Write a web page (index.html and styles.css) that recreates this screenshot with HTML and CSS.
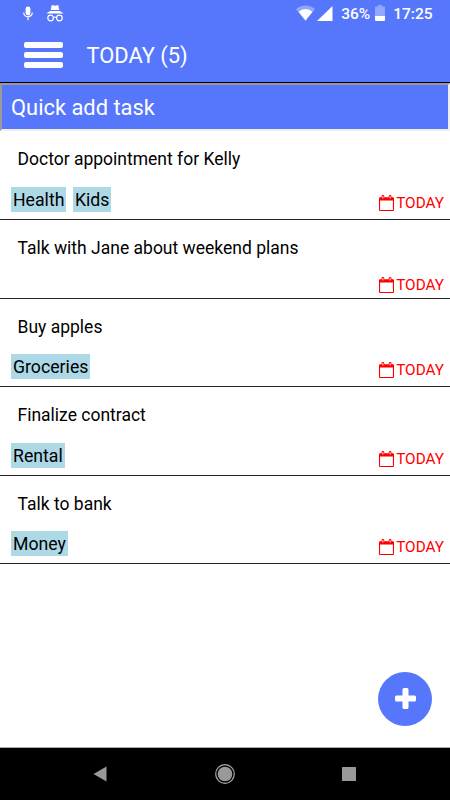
FILE: index.html
```
<!DOCTYPE html>
<html lang="en">
<head>
    <meta charset="UTF-8">
    <meta name="viewport" content="width=device-width, initial-scale=1">
    <title>Today</title>
    <link rel="stylesheet" href="styles.css">
</head>
<body>
    <svg class="defs" width="0" height="0">
        <symbol id="calendar" viewBox="0 0 15 16">
            <path d="M1 2.2h1.500v-.8a1.400 1.400 0 0 1 2.800 0v.8h4.400v-.8a1.400 1.400 0 0 1 2.800 0v.8H14q1 0 1 1V15q0 1-1 1H1q-1 0-1-1V3.200q0-1 1-1zM1.100 5.400v9.500h12.800V5.400z" fill="currentColor" fill-rule="evenodd"/>
            <path d="M3.900 1.200v2.200M11.100 1.200v2.200" stroke="#fff" stroke-width="1"/>
        </symbol>
    </svg>

    <div class="statusbar">
        <svg class="mic" width="10" height="15" viewBox="0 0 10 15">
            <rect x="2.600" y="0.500" width="4.800" height="9" rx="2.400" fill="#fff"/>
            <path d="M.7 6.500a4.300 4.300 0 0 0 8.600 0M5 11v3.200" fill="none" stroke="#fff" stroke-width="1.200"/>
        </svg>
        <svg class="incognito" width="18" height="17" viewBox="0 0 18 17">
            <path d="M5.700 0 9 .8 12.300 0l1 5H4.700zM4.200 6h9.600l3.900 2.500H.3z" fill="#fff"/>
            <g fill="none" stroke="#fff" stroke-width="1.200">
                <circle cx="4.600" cy="13" r="2.800"/>
                <circle cx="13.400" cy="13" r="2.800"/>
                <path d="M7.300 12.500q1.700-1 3.400 0"/>
            </g>
        </svg>
        <div class="system">
            <svg class="wifi" width="19" height="16" viewBox="0 0 19 16">
                <path d="M9.500 16 0 4.200Q4 .5 9.500.5T19 4.200z" fill="#fff" opacity=".35"/>
                <path d="M9.500 15.500 2.600 6.800Q5.500 4 9.500 4t6.900 2.800z" fill="#fff"/>
            </svg>
            <svg class="signal" width="16" height="15" viewBox="0 0 16 15">
                <path d="M15.500 0v15H0z" fill="#fff"/>
            </svg>
            <span class="percent">36%</span>
            <svg class="battery" width="10" height="16" viewBox="0 0 10 16">
                <path d="M3 0h4v1.500h2q1 0 1 1V11H0V2.500q0-1 1-1h2z" fill="#fff" opacity=".35"/>
                <path d="M0 11h10v4q0 1-1 1H1q-1 0-1-1z" fill="#fff"/>
            </svg>
            <span class="clock">17:25</span>
        </div>
    </div>

    <div class="header">
        <div class="menu">
            <span></span>
            <span></span>
            <span></span>
        </div>
        <div class="title">TODAY (5)</div>
    </div>

    <input class="quickadd" type="text" placeholder="Quick add task">

    <div class="tasks">
        <div class="task">
            <div class="name">Doctor appointment for Kelly</div>
            <div class="info">
                <span class="tag">Health</span>
                <span class="tag">Kids</span>
                <span class="due"><svg width="15" height="16"><use href="#calendar"/></svg>TODAY</span>
            </div>
        </div>
        <div class="task untagged">
            <div class="name">Talk with Jane about weekend plans</div>
            <div class="info">
                <span class="due"><svg width="15" height="16"><use href="#calendar"/></svg>TODAY</span>
            </div>
        </div>
        <div class="task">
            <div class="name">Buy apples</div>
            <div class="info">
                <span class="tag">Groceries</span>
                <span class="due"><svg width="15" height="16"><use href="#calendar"/></svg>TODAY</span>
            </div>
        </div>
        <div class="task">
            <div class="name">Finalize contract</div>
            <div class="info">
                <span class="tag">Rental</span>
                <span class="due"><svg width="15" height="16"><use href="#calendar"/></svg>TODAY</span>
            </div>
        </div>
        <div class="task">
            <div class="name">Talk to bank</div>
            <div class="info">
                <span class="tag">Money</span>
                <span class="due"><svg width="15" height="16"><use href="#calendar"/></svg>TODAY</span>
            </div>
        </div>
    </div>

    <button class="add" aria-label="Add task">
        <svg width="21" height="21" viewBox="0 0 21 21">
            <path d="M9 0h3q1.500 0 1.500 1.500v6h6Q21 7.500 21 9v3q0 1.500-1.500 1.500h-6v6Q13.500 21 12 21H9q-1.500 0-1.500-1.500v-6h-6Q0 13.500 0 12V9q0-1.500 1.500-1.500h6v-6Q7.500 0 9 0z" fill="#fff"/>
        </svg>
    </button>

    <div class="navbar">
        <svg width="14" height="16" viewBox="0 0 14 16"><path d="M.5 8 13.500.5v15z" fill="#999"/></svg>
        <svg width="20" height="20" viewBox="0 0 20 20">
            <circle cx="10" cy="10" r="9.300" fill="none" stroke="#aaa" stroke-width="1.200"/>
            <circle cx="10" cy="10" r="7.300" fill="#999"/>
        </svg>
        <svg width="14" height="14" viewBox="0 0 14 14"><rect width="14" height="14" rx=".5" fill="#999"/></svg>
    </div>
</body>
</html>
```

FILE: styles.css
```
* {
    box-sizing: border-box;
}

body {
    display: flex;
    flex-direction: column;
    height: 100vh;
    margin: 0;
    background-color: #fff;
    font-family: Roboto, sans-serif;
    overflow: hidden;
}

svg {
    display: block;
    flex: none;
}

.defs {
    position: absolute;
}

.statusbar {
    display: flex;
    align-items: center;
    height: 28px;
    padding: 0 17.500px 0 23px;
    background-color: #5677fc;
    color: #fff;
    font-size: 15.500px;
    font-weight: 500;
    line-height: 28px;
}

.mic {
    margin-right: 13px;
    margin-top: -1px;
}

.incognito {
    margin-top: -1px;
}

.system {
    display: flex;
    align-items: center;
    margin-left: auto;
}

.wifi {
    margin-right: 2px;
    margin-top: -2px;
}

.signal {
    margin-right: 8.500px;
    margin-top: -1px;
}

.percent {
    margin-right: 5px;
}

.battery {
    margin-right: 8px;
    margin-top: -2px;
}

.header {
    display: flex;
    align-items: center;
    height: 55px;
    padding-left: 24px;
    border-bottom: 1px solid #000;
    background-color: #5677fc;
    color: #fff;
}

.menu {
    display: flex;
    flex-direction: column;
    gap: 4px;
    width: 39px;
    margin-right: 23.500px;
    margin-top: -1px;
}

.menu span {
    height: 6px;
    border-radius: 2px;
    background-color: #fff;
}

.title {
    font-size: 21.900px;
}

.quickadd {
    width: 100%;
    height: 48px;
    flex: none;
    margin: 0;
    padding: 0 9px;
    border: 2px solid;
    border-color: #999 #eee #eee #999;
    border-radius: 0;
    background-color: #5677fc;
    font-family: inherit;
    font-size: 21.900px;
}

.quickadd::placeholder {
    color: #fff;
    opacity: 1;
}

.tasks {
    flex: 1;
}

.task {
    height: 88.600px;
    padding: 17px 6px 0 11px;
    border-bottom: 1px solid #222;
}

.name {
    padding-left: 6.500px;
    font-size: 17.500px;
    line-height: 23px;
}

.info {
    display: flex;
    gap: 6.500px;
    margin-top: 15.600px;
}

.tag {
    height: 25px;
    padding: 0 2px;
    background-color: #add8e6;
    font-size: 17.700px;
    line-height: 26px;
}

.due {
    display: flex;
    align-items: center;
    gap: 2px;
    margin: 6px 0 0 auto;
    color: #f00;
    font-size: 15.300px;
    line-height: 20px;
}

.untagged {
    height: 79px;
}

.untagged .due {
    margin-top: 0;
}

.add {
    position: absolute;
    right: 18px;
    bottom: 74px;
    display: flex;
    align-items: center;
    justify-content: center;
    width: 54px;
    height: 54px;
    padding: 0 0 2px;
    border: 0;
    border-radius: 50%;
    background-color: #5677fc;
}

.navbar {
    display: flex;
    align-items: center;
    justify-content: space-between;
    height: 53px;
    padding: 0 94px 1px 93px;
    border-top: 1px solid #aaa;
    background-color: #000;
}
```
